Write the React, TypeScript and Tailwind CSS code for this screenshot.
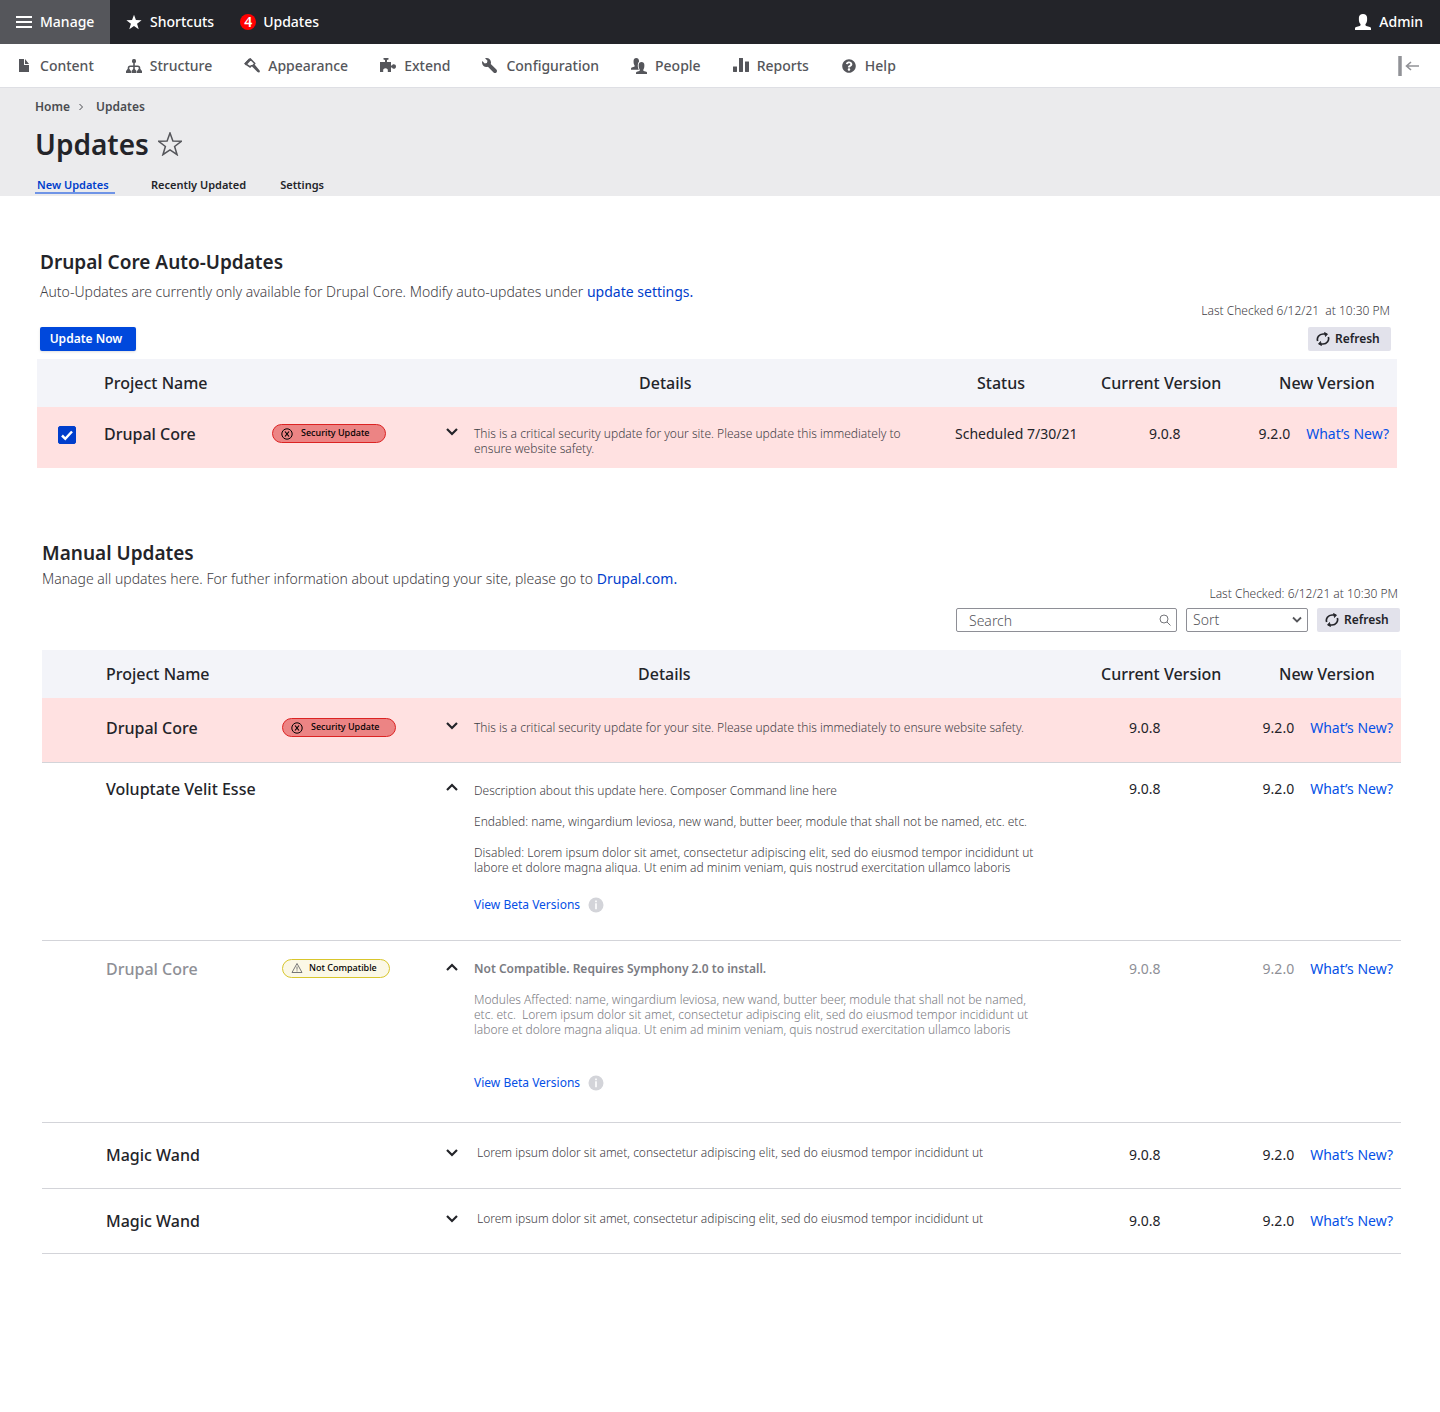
import { useState, type ReactNode } from 'react';
import { FaQuestionCircle } from 'react-icons/fa';

const STAR = '12,1 14.9,9.1 23.4,9.3 16.6,14.5 19.1,22.7 12,17.9 4.9,22.7 7.4,14.5 0.6,9.3 9.1,9.1';
const PERSON =
  'M0 16v-1.6c0-.7.4-1.3 1.1-1.5l3.6-1c.6-.2.9-.6.9-1.1 0-.5-.3-.9-.6-1.3C4.300 8.600 3.900 7.200 3.900 5.800v-2C3.900 1.600 5.500 0 8 0s4.100 1.600 4.100 3.800v2c0 1.400-.4 2.800-1.100 3.700-.3.4-.6.8-.6 1.300 0 .5.300.9.900 1.100l3.600 1c.7.2 1.100.8 1.100 1.500V16z';

const Icon = ({ children }: { children: ReactNode }) => (
  <svg viewBox="0 0 16 16" fill="currentColor" className="size-4 shrink-0" aria-hidden="true">
    {children}
  </svg>
);

const menuItems = [
  {
    label: 'Content',
    icon: <path d="M13 7H8V1H3v13h10zM9 1v5h4z" />,
  },
  {
    label: 'Structure',
    icon: (
      <>
        <rect x="6" y="1" width="4" height="4" rx="1.500" />
        <path d="M8 4v9M2.500 12v-2c0-1 .6-1.700 1.700-1.700h7.600c1.100 0 1.700.7 1.700 1.700v2" fill="none" stroke="currentColor" strokeWidth="1.600" />
        <path d="M1.700 11h1.600L5 13v2H0v-2zM7.200 11h1.600l1.700 2v2h-5v-2zM12.700 11h1.600l1.700 2v2h-5v-2z" />
      </>
    ),
  },
  {
    label: 'Appearance',
    icon: (
      <>
        <path d="M1.200 5.700 6.200.9l4.600 4.600-2.200 2.200-1.400.1-1 1.200z" fill="none" stroke="currentColor" strokeWidth="1.500" strokeLinejoin="round" />
        <path d="M.3 5.600 5 .6l2 1.600-5 5.200zM8 8.600l2.400-2.300 5 5.900c.6.700.6 1.500.1 2s-1.300.4-2-.1z" />
      </>
    ),
  },
  {
    label: 'Extend',
    icon: <path d="M3.500 0h5v1.500L7 2v2h4v3.500h1c.3-.9.900-1.300 1.700-1.300 1.300 0 2.300.9 2.300 2.300s-1 2.300-2.300 2.300c-.8 0-1.400-.4-1.700-1.200h-1V14H7.800v-1.200c.3-1.700-.7-2.600-2.300-2.600s-2.600.9-2.300 2.600V14H0V4h5V2l-1.500-.5z" />,
  },
  {
    label: 'Configuration',
    icon: <path d="M14.416 11.586 8.750 5.919c.15-.449.252-.921.252-1.419 0-2.485-2.016-4.500-4.502-4.500-.505 0-.981.102-1.434.255l2.431 2.431-.588 2.196-2.196.588L.268 3.025C.106 3.489 0 3.981 0 4.500 0 6.986 2.014 9 4.500 9c.5 0 .972-.102 1.421-.251l5.667 5.665c.781.781 2.047.781 2.828 0s.781-2.047 0-2.828z" />,
  },
  {
    label: 'People',
    icon: (
      <>
        <path transform="scale(.66 .74)" d={PERSON} />
        <path transform="translate(5 4) scale(.69 .75)" d={PERSON} stroke="#fff" strokeWidth="2.500" paintOrder="stroke" />
      </>
    ),
  },
  {
    label: 'Reports',
    icon: <path d="M.4 8.500h3.200c.2 0 .4.2.4.4v4.700c0 .2-.2.4-.4.4H.4c-.2 0-.4-.2-.4-.4V8.900c0-.2.2-.4.4-.4zM6.400 0h3.200c.2 0 .4.2.4.4v13.200c0 .2-.2.4-.4.4H6.400c-.2 0-.4-.2-.4-.4V.4C6 .2 6.200 0 6.400 0zM12.400 3.500h3.200c.2 0 .4.2.4.4v9.700c0 .2-.2.4-.4.4h-3.200c-.2 0-.4-.2-.4-.4V3.900c0-.2.2-.4.4-.4z" />,
  },
  { label: 'Help', icon: <FaQuestionCircle x="1" y="1" width="14" height="14" size={14} /> },
];

const Chevron = ({ open }: { open: boolean }) => (
  <svg viewBox="0 0 12 8" className="h-2 w-3" fill="none" stroke="#232429" strokeWidth="2.200" aria-hidden="true">
    <path d={open ? 'M1 7l5-5 5 5' : 'M1 1l5 5 5-5'} />
  </svg>
);

const SecurityBadge = () => (
  <span className="flex h-[19px] w-[114px] items-center gap-2 rounded-full border border-[#dc2323] bg-[#ec8484] pl-2 text-[9px] font-medium text-black">
    <svg viewBox="0 0 12 12" className="size-3" fill="none" stroke="currentColor" aria-hidden="true">
      <circle cx="6" cy="6" r="5.200" />
      <path d="M4 3.500l4 5M8 3.500l-4 5" strokeWidth="1.200" />
    </svg>
    Security Update
  </span>
);

const CompatBadge = () => (
  <span className="flex h-[19px] w-[108px] items-center gap-1.5 rounded-full border border-[#d8c62c] bg-[#fbf8e6] pl-2 text-[9px] font-medium text-black">
    <svg viewBox="0 0 12 12" className="size-3" fill="none" stroke="#55565b" strokeWidth=".8" strokeLinejoin="round" aria-hidden="true">
      <path d="M6 1.500l5 9H1zM6 4.500v3.200M6 8.400v1" />
    </svg>
    Not Compatible
  </span>
);

const RefreshButton = () => (
  <button type="button" className="flex h-6 w-[83px] items-center gap-[5px] rounded-xs bg-[#e2e2eb] pl-2 text-xs font-semibold text-[#232429]">
    <svg viewBox="0 0 14 14" className="size-3.5" fill="none" stroke="currentColor" strokeWidth="1.700" aria-hidden="true">
      <path d="M1.700 9C.4 5.500 3.200 2 7 2h2.800M12.300 5c1.300 3.500-1.500 7-5.300 7H4.200" />
      <path d="M8.500.5 11.500 2 9.500 4.500zM5.500 13.500 2.500 12l2-2.500z" fill="currentColor" strokeWidth=".8" />
    </svg>
    Refresh
  </button>
);

const WhatsNew = ({ version, muted = false }: { version: string; muted?: boolean }) => (
  <div className="flex justify-end gap-4 pr-2">
    <span className={muted ? 'text-[#8e8f96]' : ''}>{version}</span>
    <a href="#whats-new" className="text-[#0550e6]">What’s New?</a>
  </div>
);

const BetaLink = () => (
  <div className="flex items-center gap-2 font-normal">
    <a href="#beta" className="text-[#0550e6]">View Beta Versions</a>
    <svg viewBox="0 0 16 16" className="size-4" role="img" aria-label="About beta versions">
      <circle cx="8" cy="8" r="7.500" fill="#d3d4d9" />
      <path d="M7.200 3.600h1.600v1.600H7.200zM7.200 6.300h1.600v6H7.200z" fill="#fff" />
    </svg>
  </div>
);

interface UpdateRow {
  name: string;
  badge?: ReactNode;
  open: boolean;
  muted?: boolean;
  rowClass: string;
  details: ReactNode;
}

const manualRows: UpdateRow[] = [
  {
    name: 'Drupal Core',
    badge: <SecurityBadge />,
    open: false,
    rowClass: 'h-16 bg-[#ffe1e1] *:pt-5',
    details: (
      <p className="pt-0.5">
        This is a critical security update for your site. Please update this immediately to ensure website safety.
      </p>
    ),
  },
  {
    name: 'Voluptate Velit Esse',
    open: true,
    rowClass: 'h-[178px] *:pt-4',
    details: (
      <>
        <p className="pt-1">Description about this update here. Composer Command line here</p>
        <p className="pt-4">Endabled: name, wingardium leviosa, new wand, butter beer, module that shall not be named, etc. etc.</p>
        <p className="pt-4 pb-[22px]">
          Disabled: Lorem ipsum dolor sit amet, consectetur adipiscing elit, sed do eiusmod tempor incididunt ut
          <br />
          labore et dolore magna aliqua. Ut enim ad minim veniam, quis nostrud exercitation ullamco laboris
        </p>
        <BetaLink />
      </>
    ),
  },
  {
    name: 'Drupal Core',
    badge: <CompatBadge />,
    open: true,
    muted: true,
    rowClass: 'h-[182px] *:pt-[18px]',
    details: (
      <>
        <p className="pt-0.5 font-semibold">Not Compatible. Requires Symphony 2.0 to install.</p>
        <p className="pt-4 pb-[38px]">
          Modules Affected: name, wingardium leviosa, new wand, butter beer, module that shall not be named,
          <br />
          etc. etc.&nbsp; Lorem ipsum dolor sit amet, consectetur adipiscing elit, sed do eiusmod tempor incididunt ut
          <br />
          labore et dolore magna aliqua. Ut enim ad minim veniam, quis nostrud exercitation ullamco laboris
        </p>
        <BetaLink />
      </>
    ),
  },
  {
    name: 'Magic Wand',
    open: false,
    rowClass: 'h-[66px] *:pt-[22px]',
    details: <p className="pl-[3px]">Lorem ipsum dolor sit amet, consectetur adipiscing elit, sed do eiusmod tempor incididunt ut</p>,
  },
  {
    name: 'Magic Wand',
    open: false,
    rowClass: 'h-[65px] *:pt-[22px]',
    details: <p className="pl-[3px]">Lorem ipsum dolor sit amet, consectetur adipiscing elit, sed do eiusmod tempor incididunt ut</p>,
  },
];

const ToggleButton = ({ initial }: { initial: boolean }) => {
  const [open, setOpen] = useState(initial);
  return (
    <button type="button" aria-label="Toggle details" aria-expanded={open} onClick={() => setOpen(!open)} className="flex h-4 items-center">
      <Chevron open={open} />
    </button>
  );
};

const Toolbar = () => (
  <header className="text-sm font-medium">
    <nav aria-label="Toolbar" className="flex h-11 items-center bg-[#232429] text-white">
      <a href="#manage" className="flex h-full w-[110px] items-center gap-2 bg-[#55565b] pl-4">
        <Icon>
          <path d="M0 2h16v2H0zM0 7h16v2H0zM0 12h16v2H0z" />
        </Icon>
        Manage
      </a>
      <a href="#shortcuts" className="flex items-center gap-2 pl-4">
        <svg viewBox="0 0 24 24" className="size-4" fill="currentColor" aria-hidden="true">
          <polygon points={STAR} />
        </svg>
        Shortcuts
      </a>
      <a href="#updates" className="flex items-center gap-[7px] pl-[26px]">
        <span className="flex size-4 items-center justify-center rounded-full bg-[#ff0000] font-semibold">4</span>
        Updates
      </a>
      <a href="#admin" className="mr-[17px] ml-auto flex items-center gap-2">
        <Icon>
          <path d={PERSON} />
        </Icon>
        Admin
      </a>
    </nav>
    <nav aria-label="Administration" className="flex h-11 items-center gap-8 border-b border-[#dedfe4] px-4 text-[#55565b]">
      {menuItems.map(({ label, icon }) => (
        <a key={label} href="#menu" className="flex items-center gap-2">
          <Icon>{icon}</Icon>
          {label}
        </a>
      ))}
      <button type="button" aria-label="Collapse toolbar" className="mr-1 ml-auto">
        <svg viewBox="0 0 22 20" className="h-5 w-[22px]" fill="none" stroke="#919297" aria-hidden="true">
          <path d="M2 0v20" strokeWidth="3.500" />
          <path d="M21 10H9M13 6l-4.500 4 4.500 4" strokeWidth="1.600" />
        </svg>
      </button>
    </nav>
  </header>
);

const PageHeader = () => (
  <div className="flex h-[108px] flex-col bg-[#ebebed] pl-[35px] text-[#232429]">
    <nav aria-label="Breadcrumb" className="flex h-[38px] items-center gap-2 text-xs font-semibold text-[#4a4b50]">
      <a href="#home">Home</a>
      <svg viewBox="0 0 6 8" className="h-2 w-1.5" fill="none" stroke="currentColor" aria-hidden="true">
        <path d="M1.500 1l3 3-3 3" />
      </svg>
      <a href="#updates" className="pl-1">Updates</a>
    </nav>
    <div className="flex h-9 items-center gap-[9px]">
      <h1 className="text-[28px] font-semibold">Updates</h1>
      <svg viewBox="0 0 24 24" className="size-6" fill="none" stroke="#55565b" strokeWidth="1.500" aria-hidden="true">
        <polygon points={STAR} />
      </svg>
    </div>
    <nav aria-label="Tabs" className="mt-auto flex h-[19px] items-start text-[11px] font-semibold">
      <a href="#new" className="mr-9 h-[17px] w-20 border-b-2 border-[#6f94e6] pl-0.5 leading-4 whitespace-nowrap text-[#003ecc]">New Updates</a>
      <a href="#recent" className="mr-[34px] leading-4">Recently Updated</a>
      <a href="#settings" className="leading-4">Settings</a>
    </nav>
  </div>
);

const App = () => {
  const [selected, setSelected] = useState(true);

  return (
    <div className="bg-white font-['Noto_Sans',sans-serif] text-[#232429]">
      <Toolbar />
      <PageHeader />
      <main>
        <section className="pt-[50px] pr-[43px] pl-[37px]">
          <h2 className="pl-[3px] text-[19px] leading-8 font-semibold">Drupal Core Auto-Updates</h2>
          <p className="pt-1 pl-[3px] text-sm font-light text-[#3f4045]">
            Auto-Updates are currently only available for Drupal Core. Modify auto-updates under{' '}
            <a href="#settings" className="font-normal text-[#003ecc]">update settings.</a>
          </p>
          <p className="pt-px pr-[7px] text-right text-xs font-light text-[#3f4045]">Last Checked 6/12/21&nbsp; at 10:30 PM</p>
          <div className="flex justify-between pt-2 pr-1.5 pb-2 pl-[3px]">
            <button type="button" className="h-6 w-24 rounded-xs bg-[#0048dc] pr-1 text-xs font-semibold text-white shadow-sm">Update Now</button>
            <RefreshButton />
          </div>
          <table className="w-full table-fixed border-collapse text-left">
            <colgroup>
              <col className="w-[67px]" />
              <col className="w-[168px]" />
              <col className="w-[174px]" />
              <col className="w-7" />
              <col />
              <col className="w-[140px]" />
              <col className="w-[150px]" />
              <col className="w-[158px]" />
            </colgroup>
            <thead className="h-12 bg-[#f3f4f9] text-base *:*:font-medium">
              <tr>
                <td />
                <th colSpan={3}>Project Name</th>
                <th className="pl-[165px]">Details</th>
                <th className="pl-7">Status</th>
                <th className="pl-3">Current Version</th>
                <th className="pl-10">New Version</th>
              </tr>
            </thead>
            <tbody>
              <tr className="h-[61px] bg-[#ffe1e1] align-top text-sm *:pt-[17px]">
                <td className="pl-[21px]">
                  <label className="relative mt-0.5 block size-[18px]">
                    <input
                      type="checkbox"
                      aria-label="Select Drupal Core"
                      checked={selected}
                      onChange={(e) => setSelected(e.target.checked)}
                      className="block size-[18px] appearance-none rounded-xs border border-[#003ecc] bg-white checked:bg-[#003ecc]"
                    />
                    <svg viewBox="0 0 18 18" className="pointer-events-none absolute inset-0 size-[18px]" fill="none" stroke="#fff" strokeWidth="2.500" aria-hidden="true">
                      <path d="M4 9.500l3.300 3.300L14 5.500" />
                    </svg>
                  </label>
                </td>
                <td className="text-base leading-5 font-medium">Drupal Core</td>
                <td>
                  <SecurityBadge />
                </td>
                <td>
                  <ToggleButton initial={false} />
                </td>
                <td className="text-xs leading-[15px] font-light text-[#3f4045]">
                  <p className="w-[440px] pt-0.5">
                    This is a critical security update for your site. Please update this immediately to ensure website safety.
                  </p>
                </td>
                <td className="pl-1.5 whitespace-nowrap">Scheduled 7/30/21</td>
                <td className="pl-15">9.0.8</td>
                <td>
                  <WhatsNew version="9.2.0" />
                </td>
              </tr>
            </tbody>
          </table>
        </section>

        <section className="pt-[69px] pr-[39px] pb-40 pl-[42px]">
          <h2 className="text-[19px] leading-8 font-semibold">Manual Updates</h2>
          <p className="text-sm font-light text-[#3f4045]">
            Manage all updates here. For futher information about updating your site, please go to{' '}
            <a href="#drupal" className="font-normal text-[#003ecc]">Drupal.com.</a>
          </p>
          <p className="-mt-[3px] pr-[3px] text-right text-xs font-light text-[#3f4045]">Last Checked: 6/12/21 at 10:30 PM</p>
          <div className="flex justify-end gap-[9px] pt-1.5 pb-[18px] pr-px text-sm font-light text-[#55565b]">
            <label className="relative block">
              <input type="text" aria-label="Search" placeholder="Search" className="block h-6 w-[221px] rounded-xs border border-[#8e8f96] pr-7 pl-3 leading-5 placeholder:text-[#55565b]" />
              <svg viewBox="0 0 12 12" className="absolute top-1.5 right-1.5 size-3" fill="none" stroke="#75767b" aria-hidden="true">
                <circle cx="5" cy="5" r="4" />
                <path d="M8 8l3.500 3.500" />
              </svg>
            </label>
            <label className="relative block">
              <select aria-label="Sort" className="block h-6 w-[122px] appearance-none rounded-xs border border-[#8e8f96] bg-white pl-1.5">
                <option>Sort</option>
              </select>
              <svg viewBox="0 0 10 8" className="pointer-events-none absolute top-2 right-1.5 h-2 w-2.5" fill="none" stroke="#55565b" strokeWidth="1.800" aria-hidden="true">
                <path d="M1 1.500l4 4 4-4" />
              </svg>
            </label>
            <RefreshButton />
          </div>
          <table className="w-full table-fixed border-collapse text-left">
            <colgroup>
              <col className="w-16" />
              <col className="w-[176px]" />
              <col className="w-[164px]" />
              <col className="w-7" />
              <col />
              <col className="w-[150px]" />
              <col className="w-[158px]" />
            </colgroup>
            <thead className="h-12 bg-[#f3f4f9] text-base *:*:font-medium">
              <tr>
                <td />
                <th colSpan={3}>Project Name</th>
                <th className="pl-[164px]">Details</th>
                <th className="pl-2">Current Version</th>
                <th className="pl-9">New Version</th>
              </tr>
            </thead>
            <tbody>
              {manualRows.map(({ name, badge, open, muted, rowClass, details }, index) => (
                <tr key={index} className={`border-b border-[#d3d4d9] align-top text-sm ${rowClass}`}>
                  <td />
                  <td colSpan={badge ? 1 : 2} className={`text-base leading-5 font-medium ${muted ? 'text-[#8e8f96]' : ''}`}>
                    {name}
                  </td>
                  {badge && <td>{badge}</td>}
                  <td>
                    <ToggleButton initial={open} />
                  </td>
                  <td className={`text-xs leading-[15px] font-light ${muted ? 'text-[#7a7b82]' : 'text-[#3f4045]'}`}>{details}</td>
                  <td className={`pl-9 ${muted ? 'text-[#8e8f96]' : ''}`}>9.0.8</td>
                  <td>
                    <WhatsNew version="9.2.0" muted={muted} />
                  </td>
                </tr>
              ))}
            </tbody>
          </table>
        </section>
      </main>
    </div>
  );
};

export default App;
